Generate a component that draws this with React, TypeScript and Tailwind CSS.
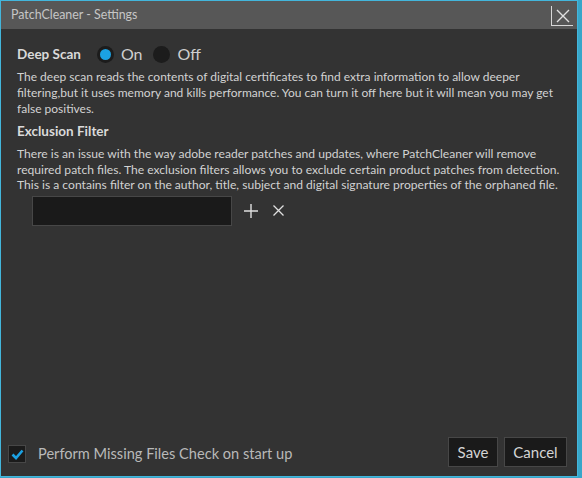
import React, { useState } from 'react';

const font = { fontFamily: 'Lato, "Noto Sans", Arial, sans-serif' };

function Radio({ checked, label, onClick }: { checked: boolean; label: string; onClick: () => void }) {
  return (
    <button onClick={onClick} className="flex items-center gap-[7px] text-[16px] text-[#cfcfcf]">
      <span className="w-[17px] h-[17px] rounded-full bg-[#1c1c1c] flex items-center justify-center">
        {checked && <span className="w-[11px] h-[11px] rounded-full bg-[#1ba1e2]" />}
      </span>
      <span className="leading-none">{label}</span>
    </button>
  );
}

export default function App() {
  const [deep, setDeep] = useState(true);
  const [check, setCheck] = useState(true);
  const [filter, setFilter] = useState('');

  return (
    <div className="w-[582px] h-[478px] bg-[#38a6c9] overflow-hidden" style={font}>
      <div className="w-[578px] h-[477px] border border-[#43b6dc] flex flex-col bg-[#333333]">
        {/* title bar */}
        <div className="h-[28px] bg-[#575757] flex items-center justify-between pl-[10px] pr-[4px]">
          <span className="text-[12.4px] text-[#c6c6c6]">PatchCleaner - Settings</span>
          <button className="w-[22px] h-[20px] mt-[2px] border-l border-b border-[#d8d8d8] flex items-center justify-center">
            <svg width="14" height="14" viewBox="0 0 14 14" stroke="#e0e0e0" strokeWidth="1.4">
              <path d="M1 1 L13 13 M13 1 L1 13" />
            </svg>
          </button>
        </div>

        <div className="flex-1 flex flex-col pl-[16px] pr-[4px]">
          <div className="mt-[14px] h-[22px] flex items-center gap-[16px]">
            <span className="text-[13.5px] font-bold text-[#dadada]">Deep Scan</span>
            <div className="flex items-center gap-[11px]">
              <Radio checked={deep} label="On" onClick={() => setDeep(true)} />
              <Radio checked={!deep} label="Off" onClick={() => setDeep(false)} />
            </div>
          </div>
          <div className="mt-[4px] text-[12px] leading-[16px] text-[#d2d2d2] whitespace-nowrap">
            <div>The deep scan reads the contents of digital certificates to find extra information to allow deeper</div>
            <div>filtering,but it uses memory and kills performance. You can turn it off here but it will mean you may get</div>
            <div>false positives.</div>
          </div>

          <div className="mt-[5px] h-[18px] flex items-center text-[13.5px] font-bold text-[#dadada]">Exclusion Filter</div>
          <div className="mt-[6px] text-[12.1px] leading-[15.5px] text-[#d2d2d2] whitespace-nowrap">
            <div>There is an issue with the way adobe reader patches and updates, where PatchCleaner will remove</div>
            <div>required patch files. The exclusion filters allows you to exclude certain product patches from detection.</div>
            <div>This is a contains filter on the author, title, subject and digital signature properties of the orphaned file.</div>
          </div>

          <div className="mt-[3px] ml-[15px] flex items-center">
            <input
              value={filter}
              onChange={(e) => setFilter(e.target.value)}
              className="w-[200px] h-[30px] bg-[#1a1a1a] border border-[#474747] text-[13px] text-[#ddd] px-2 outline-none"
            />
            <button className="ml-[11px] w-[16px] h-[16px] flex items-center justify-center">
              <svg width="14" height="14" viewBox="0 0 14 14" stroke="#e0e0e0" strokeWidth="1.4">
                <path d="M7 0 V14 M0 7 H14" />
              </svg>
            </button>
            <button className="ml-[13px] w-[12px] h-[12px] flex items-center justify-center">
              <svg width="11" height="11" viewBox="0 0 11 11" stroke="#e0e0e0" strokeWidth="1.3">
                <path d="M0.5 0.5 L10.5 10.5 M10.5 0.5 L0.5 10.5" />
              </svg>
            </button>
          </div>

          <div className="flex-1" />
        </div>

        <div className="h-[30px] mb-[9px] flex items-center pl-[7px] pr-[10px]">
          <button
            onClick={() => setCheck(!check)}
            className="w-[18px] h-[18px] mt-[4px] bg-[#1b1b1b] border border-[#474747] flex items-center justify-center"
          >
            {check && (
              <svg width="13" height="11" viewBox="0 0 13 11" fill="none" stroke="#1ba1e2" strokeWidth="2.6">
                <path d="M1.5 5.5 L5 9 L11.5 1.5" />
              </svg>
            )}
          </button>
          <span className="ml-[12px] mt-[4px] text-[14.6px] text-[#b9b9b9]">Perform Missing Files Check on start up</span>
          <div className="flex-1" />
          <button className="w-[50px] h-[30px] bg-[#1a1a1a] border border-[#474747] text-[15px] text-[#d4d4d4]">Save</button>
          <button className="ml-[6px] w-[63px] h-[30px] bg-[#1a1a1a] border border-[#474747] text-[15px] text-[#d4d4d4]">Cancel</button>
        </div>
      </div>
    </div>
  );
}
